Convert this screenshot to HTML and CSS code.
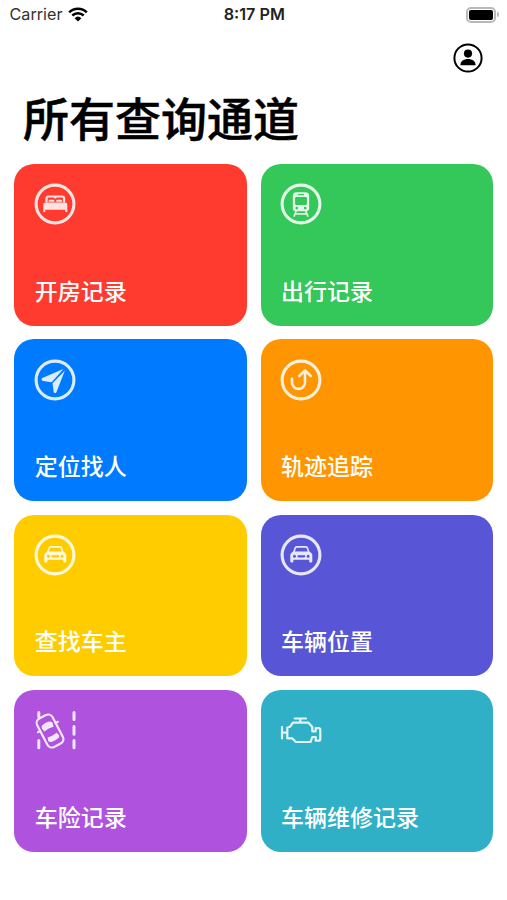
FILE: index.html
```html
<!DOCTYPE html>
<html lang="zh-CN">
<head>
    <meta charset="UTF-8">
    <meta name="viewport" content="width=device-width, initial-scale=1.0">
    <title>所有查询通道</title>
    <link rel="stylesheet" href="styles.css">
</head>
<body>

    <!-- Status Bar -->
    <div class="status-bar">
        <div class="carrier">
            <span>Carrier</span>
            <svg class="wifi" viewBox="0 0 20 15">
                <path d="M1.2 5.3a12.6 12.6 0 0 1 17.6 0M4.3 8.5a8.2 8.2 0 0 1 11.4 0" fill="none" stroke="#000" stroke-width="2.5"/>
                <path d="M6.6 11.2a5 5 0 0 1 6.8 0L10 14.6z"/>
            </svg>
        </div>
        <div class="time">8:17 PM</div>
        <div class="battery-wrap">
            <div class="battery"></div>
            <div class="battery-tip"></div>
        </div>
    </div>

    <!-- Navigation -->
    <div class="nav">
        <svg class="profile" viewBox="0 0 30 30">
            <circle cx="15" cy="15" r="13.6" fill="none" stroke="#000" stroke-width="2"/>
            <circle cx="15" cy="10.6" r="4.1"/>
            <path d="M7.4 22.2c0-4 3.2-6.2 7.6-6.2s7.6 2.2 7.6 6.2z"/>
        </svg>
    </div>

    <h1>所有查询通道</h1>

    <!-- Query Cards -->
    <div class="grid">
        <div class="card red">
            <svg class="icon" viewBox="0 0 42 42">
                <circle class="line ring" cx="21" cy="21" r="18.9"/>
                <path class="line" d="M12.5 18.5v-3q0-2 2-2h13.6q2 0 2 2v3"/>
                <path d="M14.6 17.6q0-.8.8-.8h4.2q.8 0 .8.8v1.2h-5.8zM22.2 17.6q0-.8.8-.8h4.2q.8 0 .8.8v1.2h-5.8zM20.3 13h2v2.6h-2z"/>
                <path d="M9.3 21.8q0-2.2 2.2-2.2h19.6q2.2 0 2.2 2.2V29h-2v-2.2H11.3V29h-2z"/>
            </svg>
            <span>开房记录</span>
        </div>
        <div class="card green">
            <svg class="icon" viewBox="0 0 42 42">
                <circle class="line ring" cx="21" cy="21" r="18.9"/>
                <path fill-rule="evenodd" d="M16.5 9.2h9q3.7 0 3.7 3.5v12.6q0 3-3.2 3H16q-3.2 0-3.2-3V12.7q0-3.5 3.7-3.5zM18 11v1.2h6V11zM16.3 14q-1.2 0-1.2 1.2v5.6q0 1.2 1.2 1.2h9.4q1.2 0 1.2-1.2v-5.6q0-1.2-1.2-1.2zM16.8 23.8a1.3 1.3 0 1 0 0 2.6 1.3 1.3 0 0 0 0-2.6zM25.2 23.8a1.3 1.3 0 1 0 0 2.6 1.3 1.3 0 0 0 0-2.6z"/>
                <path class="line thin" d="M16.2 28l-2 5M25.8 28l2 5M15.5 30.8h11"/>
            </svg>
            <span>出行记录</span>
        </div>
        <div class="card blue">
            <svg class="icon" viewBox="0 0 42 42">
                <circle class="line ring" cx="21" cy="21" r="18.9"/>
                <path d="M29.4 10.1L8.3 18.9q-1.5.8-.4 2.3.5.7 1.5.9l7.7 1.1q.6 0 1-.4zM30.9 11.4L19 23.7q-.4.5-.4 1l1 8q.2 1.4 1.4 1.4 1 0 1.5-1.2z"/>
            </svg>
            <span>定位找人</span>
        </div>
        <div class="card orange">
            <svg class="icon" viewBox="0 0 42 42">
                <circle class="line ring" cx="21" cy="21" r="18.9"/>
                <path class="line arrow" d="M12 19.8v3.6a6.5 6.5 0 0 0 13 0V12M19.3 17L25 11.3l5.7 5.7"/>
            </svg>
            <span>轨迹追踪</span>
        </div>
        <div class="card yellow">
            <svg class="icon" viewBox="0 0 42 42">
                <circle class="line ring" cx="21" cy="21" r="18.9"/>
                <path fill-rule="evenodd" d="M16.6 12h9.4q1.6 0 2.1 1.5l1.2 3.8 2 1.6q1 .8 1 2.2v6.1q0 1.2-1.2 1.2h-.7q-1.2 0-1.2-1.2v-1.5H13.4v1.5q0 1.2-1.2 1.2h-.7q-1.2 0-1.2-1.2v-6.1q0-1.4 1-2.2l2-1.6 1.2-3.8q.5-1.5 2.1-1.5zM16.8 13.7q-.7 0-.9.7l-1 3.1h12.8l-1-3.1q-.2-.7-.9-.7zM14.5 20.8a1.5 1.5 0 1 0 0 3 1.5 1.5 0 0 0 0-3zM28.1 20.8a1.5 1.5 0 1 0 0 3 1.5 1.5 0 0 0 0-3zM18.4 21.2a1.1 1.1 0 0 0 0 2.2h5.8a1.1 1.1 0 0 0 0-2.2z"/>
            </svg>
            <span>查找车主</span>
        </div>
        <div class="card indigo">
            <svg class="icon" viewBox="0 0 42 42">
                <circle class="line ring" cx="21" cy="21" r="18.9"/>
                <path fill-rule="evenodd" d="M16.6 12h9.4q1.6 0 2.1 1.5l1.2 3.8 2 1.6q1 .8 1 2.2v6.1q0 1.2-1.2 1.2h-.7q-1.2 0-1.2-1.2v-1.5H13.4v1.5q0 1.2-1.2 1.2h-.7q-1.2 0-1.2-1.2v-6.1q0-1.4 1-2.2l2-1.6 1.2-3.8q.5-1.5 2.1-1.5zM16.8 13.7q-.7 0-.9.7l-1 3.1h12.8l-1-3.1q-.2-.7-.9-.7zM14.5 20.8a1.5 1.5 0 1 0 0 3 1.5 1.5 0 0 0 0-3zM28.1 20.8a1.5 1.5 0 1 0 0 3 1.5 1.5 0 0 0 0-3zM18.4 21.2a1.1 1.1 0 0 0 0 2.2h5.8a1.1 1.1 0 0 0 0-2.2z"/>
            </svg>
            <span>车辆位置</span>
        </div>
        <div class="card purple">
            <svg class="icon" viewBox="0 0 42 42">
                <path class="line lane" d="M4.8 3.4v4.4M4.8 31.4v7.4M40 3.4v7M40 17.4v7.8M40 31.4v7.4"/>
                <g transform="rotate(-27.5 16 22)">
                    <rect class="line" x="7.3" y="6" width="17.4" height="32" rx="5"/>
                    <path d="M9.9 16.2q0-3.4 6.1-3.4t6.1 3.4l-1 3.7q-5.1-1.2-10.2 0zM10.9 26.6q5.1 1 10.2 0l1 3.4q0 2.6-6.1 2.6T9.9 30z"/>
                    <path class="line" d="M7.2 17.5H4.8M24.8 17.5h2.4"/>
                </g>
            </svg>
            <span>车险记录</span>
        </div>
        <div class="card teal">
            <svg class="icon" viewBox="0 0 42 42">
                <path class="line" d="M14.7 9.5H26M20.3 9.5v4M2 18.2v11.2M2 23.7h5.3M12.9 13.7H28.4L32.3 17.9v4.4h3.4v-3.2h2.8q1.8 0 1.8 1.8v9q0 1.8-1.8 1.8h-2.8V28h-3.4L30.6 33H15.8L12.2 29.3H7.3V18.5l2.9-.8z"/>
            </svg>
            <span>车辆维修记录</span>
        </div>
    </div>

</body>
</html>
```
FILE: styles.css
```css
/* Global Styles */
body {
    margin: 0;
    background-color: #fff;
    color: #000;
    font-family: Inter, 'Noto Sans CJK SC', sans-serif;
}

svg {
    display: block;
    overflow: visible;
}

/* Status Bar */
.status-bar {
    display: grid;
    grid-template-columns: 1fr auto 1fr;
    align-items: center;
    height: 29px;
    padding: 0 8px 0 9.5px;
    font-size: 16.2px;
    line-height: 29px;
}

.carrier {
    display: flex;
    align-items: center;
    gap: 5.5px;
    color: #333;
}

.wifi {
    width: 20px;
    height: 15px;
}

.time {
    font-weight: 600;
    color: #222;
}

.battery-wrap {
    display: flex;
    justify-content: flex-end;
    align-items: center;
    gap: 1px;
}

.battery {
    box-sizing: border-box;
    width: 30px;
    height: 16px;
    padding: 1px;
    border: 2px solid #b9b9b9;
    border-radius: 5px;
    background: #000 content-box;
}

.battery-tip {
    width: 2px;
    height: 5px;
    border-radius: 0 2px 2px 0;
    background-color: #b9b9b9;
}

/* Navigation */
.nav {
    display: flex;
    justify-content: flex-end;
    padding: 14px 24.5px 0 0;
}

.profile {
    width: 30px;
    height: 30px;
}

h1 {
    margin: 9px 0 0 23px;
    font-family: 'Noto Sans CJK SC', sans-serif;
    font-size: 46px;
    font-weight: 500;
    line-height: 68px;
    -webkit-text-stroke: 0.5px #000;
}

/* Query Cards */
.grid {
    display: grid;
    grid-template-columns: 1fr 1fr;
    grid-auto-rows: 161.7px;
    gap: 13.6px;
    padding: 14px 13.7px 0 14.3px;
}

.card {
    display: flex;
    flex-direction: column;
    justify-content: space-between;
    box-sizing: border-box;
    padding: 19.3px 20px 19px 19.5px;
    border-radius: 20px;
    color: #fff;
    font-family: 'Noto Sans CJK SC', sans-serif;
    font-size: 23px;
    font-weight: 500;
    line-height: 34px;
}

.card span {
    padding-left: 1px;
}

.red { background-color: #ff3b30; }
.green { background-color: #34c759; }
.blue { background-color: #007aff; }
.orange { background-color: #ff9500; }
.yellow { background-color: #ffcc00; }
.indigo { background-color: #5856d6; }
.purple { background-color: #af52de; }
.teal { background-color: #30b0c7; }

/* Icons */
.icon {
    width: 42px;
    height: 42px;
    fill: #fff;
    opacity: 0.86;
}

.line {
    fill: none;
    stroke: #fff;
    stroke-width: 2.2;
    stroke-linecap: round;
    stroke-linejoin: round;
}

.ring {
    stroke-width: 3.1;
}

.thin {
    stroke-width: 1.7;
}

.arrow {
    stroke-width: 2.6;
}

.lane {
    stroke-width: 3;
}
```
